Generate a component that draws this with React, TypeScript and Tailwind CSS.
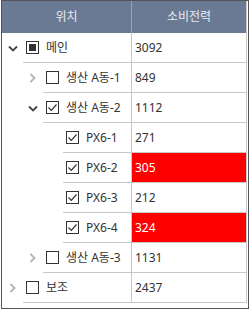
import React from "react";

type Row = {
  label: string;
  value: string;
  level: number;
  chevron: "open" | "closed" | "none";
  check: "checked" | "partial" | "empty";
  red?: boolean;
};

const rows: Row[] = [
  { label: "메인", value: "3092", level: 0, chevron: "open", check: "partial" },
  { label: "생산 A동-1", value: "849", level: 1, chevron: "closed", check: "empty" },
  { label: "생산 A동-2", value: "1112", level: 1, chevron: "open", check: "checked" },
  { label: "PX6-1", value: "271", level: 2, chevron: "none", check: "checked" },
  { label: "PX6-2", value: "305", level: 2, chevron: "none", check: "checked", red: true },
  { label: "PX6-3", value: "212", level: 2, chevron: "none", check: "checked" },
  { label: "PX6-4", value: "324", level: 2, chevron: "none", check: "checked", red: true },
  { label: "생산 A동-3", value: "1131", level: 1, chevron: "closed", check: "empty" },
  { label: "보조", value: "2437", level: 0, chevron: "closed", check: "empty" },
];

function Chevron({ kind }: { kind: Row["chevron"] }) {
  if (kind === "open")
    return (
      <svg width="10" height="7" viewBox="0 0 10 7">
        <path d="M1 1.5 L5 5.5 L9 1.5" fill="none" stroke="#444" strokeWidth="1.8" />
      </svg>
    );
  if (kind === "closed")
    return (
      <svg width="7" height="10" viewBox="0 0 7 10">
        <path d="M1.5 1 L5.5 5 L1.5 9" fill="none" stroke="#b4b4b4" strokeWidth="1.8" />
      </svg>
    );
  return null;
}

function Check({ kind }: { kind: Row["check"] }) {
  return (
    <div className="w-[13px] h-[13px] border border-[#333] bg-white flex items-center justify-center shrink-0">
      {kind === "partial" && <div className="w-[7px] h-[7px] bg-[#333]" />}
      {kind === "checked" && (
        <svg width="11" height="11" viewBox="0 0 11 11">
          <path d="M1.5 5.5 L4.3 8.3 L9.5 2.5" fill="none" stroke="#333" strokeWidth="1.2" />
        </svg>
      )}
    </div>
  );
}

export default function App() {
  return (
    <div
      className="ml-px w-[248px] h-[309px] border border-[#555] bg-white"
      style={{ fontFamily: '"Noto Sans", "Noto Sans CJK KR", sans-serif' }}
    >
      <div className="w-[245px] border-r border-[#c8c8c8]">
        <div className="flex h-[32px] bg-[#6b7a94] text-[12px] text-[#e8ecf2]">
          <div className="w-[130px] border-r border-[#9aa5b8] flex items-center justify-center">위치</div>
          <div className="flex-1 flex items-center justify-center">소비전력</div>
        </div>
        {rows.map((r, i) => (
          <div key={i} className="flex h-[30px] text-[12px] text-[#333]">
            <div className="w-[130px] border-r border-[#c8c8c8] flex" style={{ paddingLeft: r.level * 20 }}>
              <div className="w-[21px] flex items-center justify-center shrink-0">
                <Chevron kind={r.chevron} />
              </div>
              <div className="flex-1 border-b border-[#c8c8c8] flex items-center pl-[3px] gap-[7px] whitespace-nowrap">
                <Check kind={r.check} />
                <span>{r.label}</span>
              </div>
            </div>
            <div
              className={
                "flex-1 border-b border-[#c8c8c8] flex items-center pl-[3px] " +
                (r.red ? "bg-[#ff0000] text-white" : "")
              }
            >
              {r.value}
            </div>
          </div>
        ))}
      </div>
    </div>
  );
}
